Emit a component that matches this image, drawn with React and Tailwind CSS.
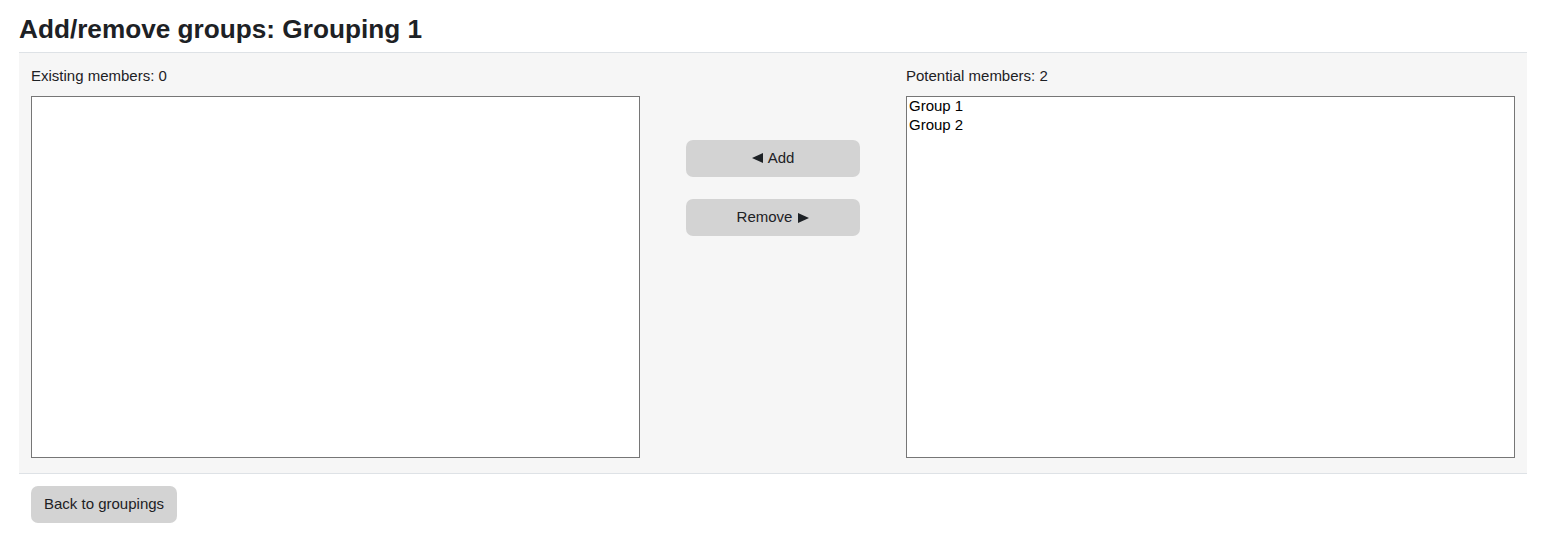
const font = { fontFamily: '"Liberation Sans", Arial, sans-serif' };

function MemberList({ label, items }) {
    return (
        <div className="flex flex-col">
            <p className="text-[15px] leading-[22px] text-[#1d2125] mt-[1px] mb-[9px]">{label}</p>
            <div className="h-[362px] bg-white border border-[#767676] px-[1px]">
                {items.map((item) => (
                    <div key={item} className="text-[15px] leading-[17px] pb-[2px] text-black px-[1px]">{item}</div>
                ))}
            </div>
        </div>
    );
}

function GreyButton({ children, className = '' }) {
    return (
        <button className={`h-[37px] rounded-[7px] bg-[#d3d3d3] text-[15px] text-[#1d2125] ${className}`}>
            {children}
        </button>
    );
}

function Arrow({ dir }) {
    return (
        <svg width="11" height="10" viewBox="0 0 11 10" className="inline-block align-[-1px]">
            {dir === 'left'
                ? <polygon points="0,5 11,0 11,10" fill="#1d2125" />
                : <polygon points="11,5 0,0 0,10" fill="#1d2125" />}
        </svg>
    );
}

export default function App() {
    return (
        <div className="bg-white min-h-[535px] pl-[19px] pr-[16px]" style={font}>
            <h2 className="pt-[14px] pb-[7px] text-[26.2px] leading-[31px] font-bold text-[#1d2125]">
                Add/remove groups: Grouping 1
            </h2>
            <div className="bg-[#f6f6f6] border-t border-b border-[#dee2e6] px-[12px] pt-[11px] pb-[15px]">
                <div className="grid grid-cols-[609px_266px_609px]">
                    <MemberList label="Existing members: 0" items={[]} />
                    <div className="flex flex-col items-center pt-[76px] gap-[22px]">
                        <GreyButton className="w-[174px]">
                            <span className="inline-flex items-center gap-[5px]"><Arrow dir="left" />Add</span>
                        </GreyButton>
                        <GreyButton className="w-[174px]">
                            <span className="inline-flex items-center gap-[6px]">Remove<Arrow dir="right" /></span>
                        </GreyButton>
                    </div>
                    <MemberList label="Potential members: 2" items={['Group 1', 'Group 2']} />
                </div>
            </div>
            <div className="pt-[12px] pl-[12px]">
                <GreyButton className="px-[13px]">Back to groupings</GreyButton>
            </div>
        </div>
    );
}
